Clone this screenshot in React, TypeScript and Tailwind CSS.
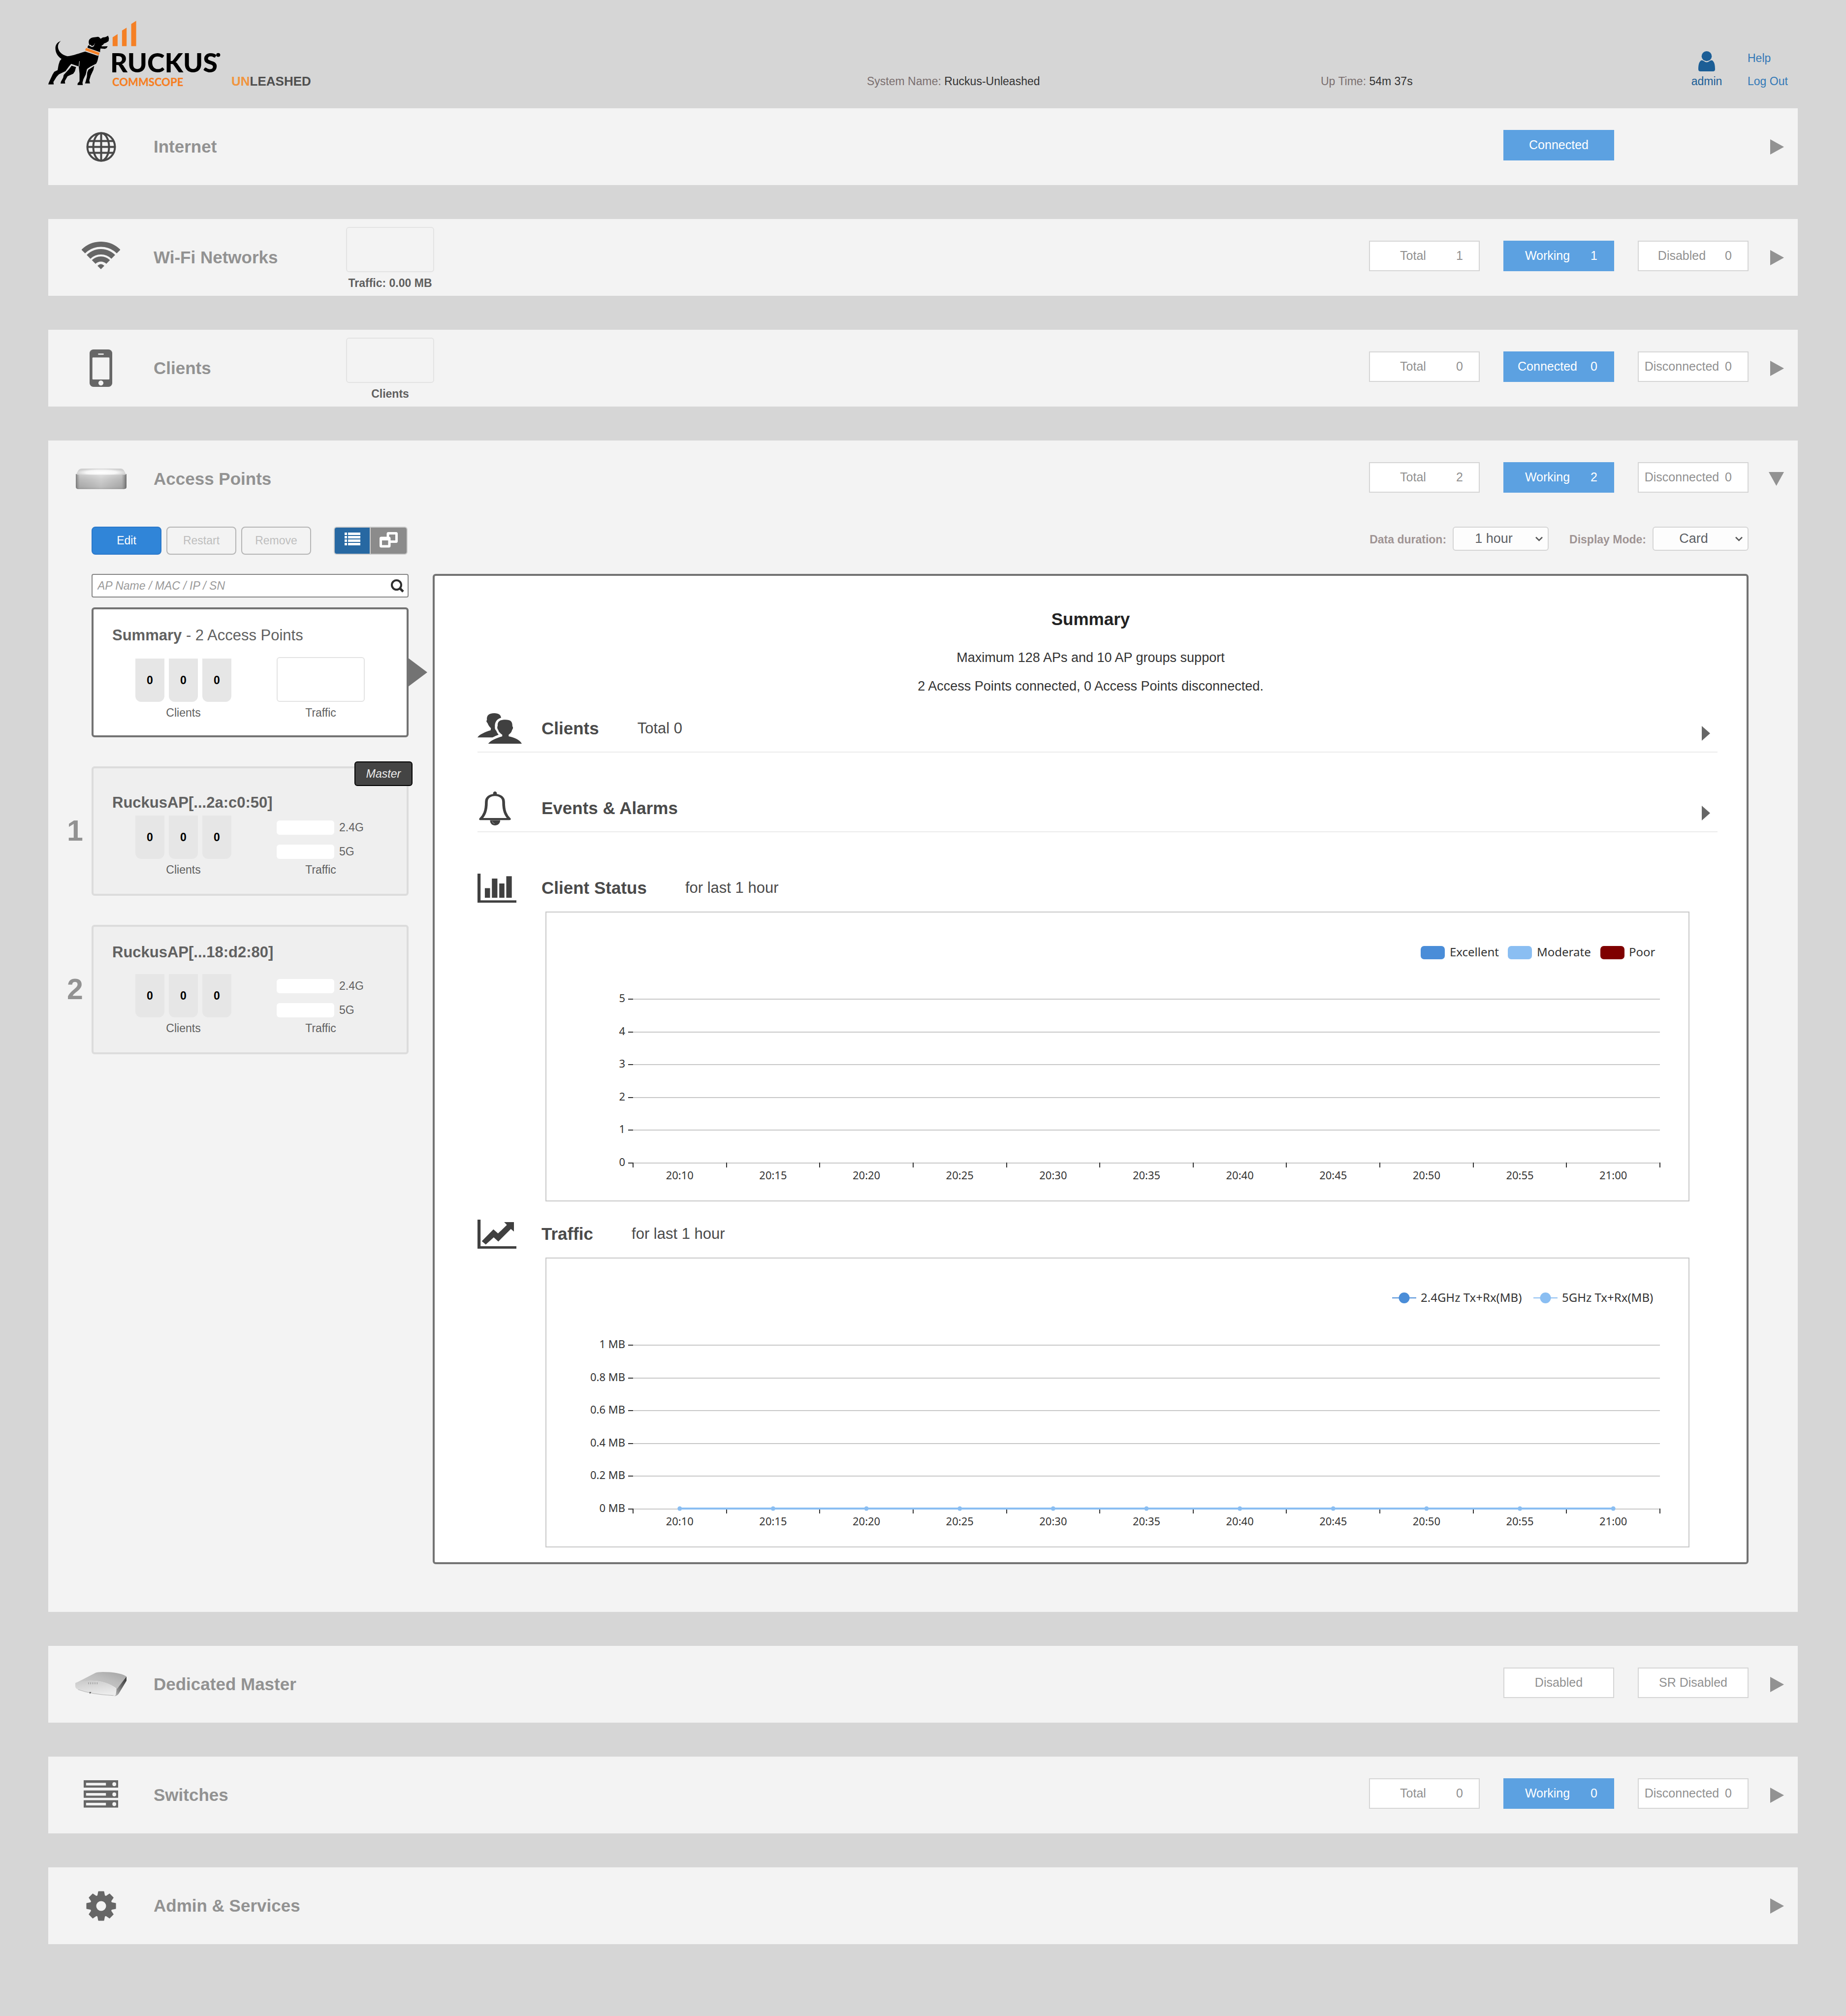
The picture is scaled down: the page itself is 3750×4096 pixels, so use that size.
import type { ReactNode } from "react";

type Chip = { label: string; value?: number; active?: boolean } | null;

const ARIAL = "font-['Liberation_Sans',Arial,sans-serif]";

/* ---------- Logo ---------- */

function Logo() {
  return (
    <svg width="354" height="140" viewBox="0 0 354 140" role="img" aria-label="Ruckus CommScope" className="shrink-0">
      <g transform="scale(0.3737 0.3255) translate(-52 -60)">
        <path d="M121 195 C106 210 103 225 106 242 C110 266 132 286 156 291 C188 288 220 272 253 262 L320 288 L326 286 C322 312 318 330 312 338 C292 350 272 360 262 373 L256 405 L243 435 L238 456 L240 471 L211 471 L212 460 L222 448 L222 400 L218 355 L200 348 L177 339 L165 354 L146 384 L110 404 L97 420 L80 452 L82 467 L52 467 L55 456 L76 404 L85 388 L103 378 L108 345 L115 320 L124 308 C98 288 90 262 91 236 C93 214 106 202 121 195 Z" />
        <path d="M179 350 L203 359 L197 385 L188 400 L157 416 L142 446 L144 462 L119 462 L121 450 L133 425 L136 408 L152 388 L165 372 Z" />
        <path d="M302 351 L298 375 L283 412 L275 442 L279 461 L252 461 L256 446 L262 420 L264 392 L270 376 Z" />
        <path d="M272 204 C271 184 286 174 302 173 C314 172 322 167 328 172 L337 182 L349 174 C360 174 368 170 377 163 L382 178 L380 197 L368 206 L355 212 L350 220 L342 225 L343 230 L375 229 L370 240 L360 245 L336 243 L334 256 L334 266 L265 238 L268 226 L276 220 C273 215 272 209 272 204 Z" />
        <path d="M273 224 L290 234 L300 229 L307 207 L300 222 L290 228 L280 219 Z" fill="#d6d6d6" />
        <path d="M222 322 L219 355" stroke="#d6d6d6" strokeWidth="3" />
        <path d="M258 239 L331 270 L327 285 L252 254 Z" fill="#f58025" />
        <path d="M402 228 V173 L429 153 V228 Z M453 228 V131 L478 113 V228 Z M503 228 V90 L530 70 V228 Z" fill="#f58025" />
        <ellipse cx="976" cy="283" rx="11" ry="12" />
      </g>
      <text x="126" y="108" fontSize="54" fontWeight="900" className="font-['Lato',sans-serif]">
        RUCKUS
      </text>
      <text x="130" y="136" fontSize="22" fontWeight="900" fill="#f58025" className="font-['Lato',sans-serif]">
        COMMSCOPE
      </text>
    </svg>
  );
}

/* ---------- Section icons ---------- */

function GlobeIcon() {
  return (
    <svg width="61" height="61" viewBox="0 0 61 61" fill="none" stroke="#484848" strokeWidth="4">
      <circle cx="30.5" cy="30.5" r="28" />
      <ellipse cx="30.5" cy="30.5" rx="16" ry="28" />
      <path d="M30.5 2 V59 M6 18.5 H55 M2 30.5 H59 M6 42.5 H55" />
    </svg>
  );
}

function WifiIcon() {
  return (
    <svg width="78" height="56" viewBox="0 0 78 56" fill="none" stroke="#666" className="mb-2">
      <path d="M3.1 20.1 A50.75 50.75 0 0 1 74.9 20.1" strokeWidth="10.5" />
      <path d="M13.9 30.9 A35.5 35.5 0 0 1 64.1 30.9" strokeWidth="10.8" />
      <path d="M24.3 41.3 A20.75 20.75 0 0 1 53.7 41.3" strokeWidth="10.5" />
      <path d="M39 56 L32 49 Q39 42 46 49 Z" fill="#666" stroke="none" />
    </svg>
  );
}

function PhoneIcon() {
  return (
    <svg width="46" height="76" viewBox="186 1241 81 192" preserveAspectRatio="none">
      <rect x="186" y="1241" width="81" height="192" rx="14" ry="19" fill="#666" />
      <rect x="196" y="1282" width="61" height="113" rx="3" fill="#f3f3f3" />
      <rect x="216" y="1262" width="21" height="6" rx="3" fill="#f3f3f3" />
      <ellipse cx="226.5" cy="1413" rx="9" ry="13" fill="#f3f3f3" />
    </svg>
  );
}

function AccessPointIcon() {
  return (
    <svg width="103" height="42" viewBox="97 165 183 97" preserveAspectRatio="none">
      <defs>
        <linearGradient id="apFront" x1="0" y1="0" x2="0" y2="1">
          <stop offset="0" stopColor="#dadada" />
          <stop offset="0.35" stopColor="#c4c4c4" />
          <stop offset="0.9" stopColor="#adadad" />
          <stop offset="1" stopColor="#8a8a8a" />
        </linearGradient>
        <linearGradient id="apEdge" x1="0" y1="0" x2="1" y2="0">
          <stop offset="0" stopColor="#666" stopOpacity="0.8" />
          <stop offset="0.08" stopColor="#888" stopOpacity="0.15" />
          <stop offset="0.5" stopColor="#fff" stopOpacity="0.2" />
          <stop offset="0.9" stopColor="#888" stopOpacity="0.2" />
          <stop offset="1" stopColor="#555" stopOpacity="0.8" />
        </linearGradient>
        <radialGradient id="apTop">
          <stop offset="0" stopColor="#fff" />
          <stop offset="0.6" stopColor="#f6f6f6" />
          <stop offset="1" stopColor="#cfcfcf" />
        </radialGradient>
      </defs>
      <path d="M97 202 Q104 165 118 165 H260 Q272 165 280 202 Z" fill="url(#apTop)" />
      <path d="M97 190 Q100 195 110 194 H267 Q277 195 280 190 V250 Q280 261 271 261 H106 Q97 261 97 250 Z" fill="url(#apFront)" />
      <path d="M97 190 Q100 195 110 194 H267 Q277 195 280 190 V250 Q280 261 271 261 H106 Q97 261 97 250 Z" fill="url(#apEdge)" />
    </svg>
  );
}

function MasterIcon() {
  return (
    <svg width="104" height="50" viewBox="172 222 238 113" preserveAspectRatio="none">
      <defs>
        <linearGradient id="dmTop" x1="0" y1="1" x2="1" y2="0">
          <stop offset="0" stopColor="#d2d2d2" />
          <stop offset="0.6" stopColor="#bcbcbc" />
          <stop offset="1" stopColor="#a2a2a2" />
        </linearGradient>
        <linearGradient id="dmFront" x1="0" y1="0" x2="0.4" y2="1">
          <stop offset="0" stopColor="#c9c9c9" />
          <stop offset="1" stopColor="#ececec" />
        </linearGradient>
        <linearGradient id="dmSide" x1="0" y1="1" x2="1" y2="0">
          <stop offset="0" stopColor="#bdbdbd" />
          <stop offset="0.5" stopColor="#6e6e6e" />
          <stop offset="1" stopColor="#333" />
        </linearGradient>
      </defs>
      <path d="M410 243 V262 L375 320 Q366 334 352 333 L362 300 Z" fill="url(#dmSide)" />
      <path d="M172 274 L266 226 Q275 222 300 222 Q378 222 410 243 L404 250 L366 300 Q320 262 240 262 Z" fill="url(#dmTop)" />
      <path d="M172 273 C190 264 215 262 240 262 C300 262 340 278 364 301 L360 328 Q355 334 344 333 Q260 328 185 303 Q172 297 172 288 Z" fill="url(#dmFront)" />
      <path d="M232 274 H280" stroke="#999" strokeWidth="9" strokeDasharray="3 7" />
      <path d="M185 303 Q250 326 350 330" stroke="#aaa" strokeWidth="2" fill="none" />
      <path d="M237 314 H246 L240 323 Z" fill="#555" />
    </svg>
  );
}

function SwitchIcon() {
  return (
    <svg width="70" height="56" viewBox="211 724 161 127" preserveAspectRatio="none" className="mb-1">
      {[724, 771, 816].map((y) => (
        <g key={y}>
          <rect x="211" y={y} width="161" height="34" fill="#666" />
          <rect x="222" y={y + 12} width="93" height="12" fill="#f3f3f3" />
          <circle cx="354" cy={y + 18} r="9" fill="#f3f3f3" />
        </g>
      ))}
    </svg>
  );
}

function GearIcon() {
  return (
    <svg width="61" height="61" viewBox="-70 -70 140 140">
      <g fill="#666" stroke="#666" strokeWidth="4" strokeLinejoin="round">
        <circle r="50" />
        {[0, 45, 90, 135, 180, 225, 270, 315].map((a) => (
          <path key={a} d="M-16 -46 L-12 -67 H12 L16 -46 Z" transform={`rotate(${a})`} />
        ))}
      </g>
      <circle r="23" fill="#f3f3f3" />
    </svg>
  );
}

/* ---------- Summary icons ---------- */

function PeopleIcon() {
  return (
    <svg width="90" height="62" viewBox="147 625 145 132" preserveAspectRatio="none" fill="#404040">
      <path d="M213 680 C212 660 220 653 238 653 C256 653 262 662 261 682 C264 684 264 692 260 698 C258 710 253 714 249 718 L249 725 C268 730 286 740 292 757 L182 757 C190 742 210 732 228 725 L228 718 C222 713 216 706 215 698 C211 692 211 684 213 680 Z" />
      <path d="M178 655 C176 635 184 625 202 625 C216 625 224 633 224 645 C210 650 203 664 204 684 C203 692 206 698 209 702 C210 708 213 712 216 718 C208 722 202 726 196 730 L147 730 C152 718 172 706 190 699 L191 690 C186 684 182 676 180 668 C175 662 176 657 178 655 Z" />
    </svg>
  );
}

function BellIcon() {
  return (
    <svg width="65" height="69" viewBox="151 961 104 145" preserveAspectRatio="none" className="ml-[3px]">
      <path
        d="M156 1079 C168 1063 175 1045 175 1005 C175 986 188 976 203 976 C218 976 231 986 231 1005 C231 1045 238 1063 250 1079 Z"
        fill="none"
        stroke="#404040"
        strokeWidth="9"
        strokeLinejoin="round"
      />
      <path d="M197 974 V966 Q203 956 209 966 V974 Z M187 1084 H220 C220 1098 212 1106 203 1106 C194 1106 187 1098 187 1084 Z" fill="#404040" />
      <path d="M194 1089 Q196 1097 202 1099" fill="none" stroke="#fff" strokeWidth="1" />
    </svg>
  );
}

function BarsIcon() {
  return (
    <svg width="79" height="59" viewBox="147 1316 127 124" preserveAspectRatio="none">
      <path
        d="M147 1316 H157 V1430 H274 V1440 H147 Z M171 1378 H188 V1419 H171 Z M194 1337 H212 V1419 H194 Z M218 1358 H235 V1419 H218 Z M241 1327 H259 V1419 H241 Z"
        fill="#404040"
      />
    </svg>
  );
}

function TrendIcon() {
  return (
    <svg width="79" height="59" viewBox="53 275 127 105" preserveAspectRatio="none">
      <path
        d="M53 275 H63 V371 H180 V380 H53 Z M67 353 L105 310 L120 325 L149 294 L140 284 H172 V318 L162 309 L121 354 L106 339 L80 365 Z"
        fill="#404040"
      />
    </svg>
  );
}

/* ---------- Section rows ---------- */

function Expander({ open, name }: { open?: boolean; name: string }) {
  return (
    <button
      type="button"
      aria-expanded={!!open}
      aria-label={`Toggle ${name}`}
      className="flex h-full w-[100px] shrink-0 items-center justify-end pr-7"
    >
      {open ? (
        <svg width="31" height="28" viewBox="0 0 31 28" fill="#929292">
          <path d="M0 0 H31 L15.5 28 Z" />
        </svg>
      ) : (
        <svg width="28" height="31" viewBox="0 0 28 31" fill="#929292">
          <path d="M0 0 L28 15.5 L0 31 Z" />
        </svg>
      )}
    </button>
  );
}

function StatusChip({ chip }: { chip: Chip }) {
  if (!chip) return <div />;
  return (
    <div
      className={
        chip.active
          ? "flex h-[62px] items-center border-2 border-[#5ca1e1] bg-[#5ca1e1] text-[25px] text-white"
          : "flex h-[62px] items-center border-2 border-[#d5d5d5] bg-white text-[25px] text-[#919191]"
      }
    >
      {chip.value === undefined ? (
        <span className="w-full text-center">{chip.label}</span>
      ) : (
        <>
          <span className="w-[175px] text-center">{chip.label}</span>
          <span>{chip.value}</span>
        </>
      )}
    </div>
  );
}

function SectionHeader({
  icon,
  title,
  chips,
  graph,
  open,
}: {
  icon: ReactNode;
  title: string;
  chips?: Chip[];
  graph?: string;
  open?: boolean;
}) {
  return (
    <div className="flex h-[156px] items-center">
      <div className="flex w-[214px] shrink-0 justify-center">{icon}</div>
      <h2 className="w-[391px] shrink-0 text-[35px] font-bold text-[#929292]">{title}</h2>
      {graph && (
        <div className="flex flex-col items-center gap-2 pt-1">
          <div className="h-[92px] w-[179px] rounded-md border-2 border-[#e3e3e3]" />
          <span className="text-[23px] leading-7 font-bold whitespace-nowrap text-[#5f5f5f]">{graph}</span>
        </div>
      )}
      <div className="ml-auto grid grid-cols-[225px_225px_225px] gap-12 pb-1.5">
        {(chips ?? []).map((chip, i) => (
          <StatusChip key={i} chip={chip} />
        ))}
      </div>
      <Expander open={open} name={title} />
    </div>
  );
}

/* ---------- Access point list ---------- */

function ClientCounts() {
  return (
    <div className="flex flex-col items-center gap-2">
      <div className="flex gap-[9px]">
        {["2.4G", "5G", "total"].map((band) => (
          <span
            key={band}
            className="flex h-[88px] w-[59px] items-center justify-center rounded-b-xl bg-[#e6e6e6] text-[23px] font-bold text-black"
          >
            0
          </span>
        ))}
      </div>
      <span className="text-[23px] leading-7 text-[#616161]">Clients</span>
    </div>
  );
}

function ApCard({ index, name, master }: { index: number; name: string; master?: boolean }) {
  return (
    <li className="flex items-center">
      <span className="w-[88px] shrink-0 pl-[38px] text-[59px] font-bold text-[#929292]">{index}</span>
      <article
        className={
          master
            ? "relative h-[263px] flex-1 rounded-md border-4 border-[#dcdcdc] bg-[#efefef] px-[38px] pt-[52px]"
            : "relative h-[263px] flex-1 rounded-md border-4 border-[#dcdcdc] bg-[#efefef] px-[38px] pt-[34px]"
        }
      >
        {master && (
          <span className="absolute -top-[14px] -right-3 flex h-[50px] w-[118px] items-center justify-center rounded-md border-2 border-black bg-[#444] text-[23px] text-[#eee] italic">
            Master
          </span>
        )}
        <h3 className="text-[31px] leading-9 font-bold text-[#616161]">{name}</h3>
        <div className={master ? "mt-2 flex items-end gap-[92px] pl-[47px]" : "mt-[26px] flex items-end gap-[92px] pl-[47px]"}>
          <ClientCounts />
          <div className="flex w-[179px] flex-col gap-2">
            <div className="flex flex-col gap-5 text-[23px] leading-[29px] text-[#616161]">
              {["2.4G", "5G"].map((band) => (
                <div key={band} className="flex gap-[10px]">
                  <span className="h-[29px] w-[117px] rounded-md bg-white" />
                  {band}
                </div>
              ))}
            </div>
            <span className="text-center text-[23px] leading-7 text-[#616161]">Traffic</span>
          </div>
        </div>
      </article>
    </li>
  );
}

function ApSidebar() {
  return (
    <div className="w-[732px] shrink-0">
      <div className="mb-[39px] ml-[88px] flex h-[57px] gap-[10px] text-[23px]">
        <button type="button" className="w-[142px] rounded-lg border-2 border-[#2a78ca] bg-[#3085d8] text-white">
          Edit
        </button>
        <button type="button" disabled className="w-[142px] rounded-lg border-2 border-[#b5b5b5] text-[#bebebe]">
          Restart
        </button>
        <button type="button" disabled className="w-[142px] rounded-lg border-2 border-[#b5b5b5] text-[#bebebe]">
          Remove
        </button>
        <div className="mr-0.5 ml-auto flex w-[150px] overflow-hidden rounded-md border-2 border-[#ccc]">
          <button type="button" aria-label="List view" aria-pressed="true" className="flex w-[73px] justify-center border-r-2 border-[#ccc] bg-[#2768a2] pt-[10px]">
            <svg width="32" height="26" viewBox="0 0 32 26" fill="#fff">
              {[0, 7, 14, 21].map((y) => (
                <g key={y}>
                  <rect y={y} width="5" height="5" />
                  <rect x="7" y={y} width="25" height="5" />
                </g>
              ))}
            </svg>
          </button>
          <button type="button" aria-label="Group view" aria-pressed="false" className="flex flex-1 justify-center bg-[#8b8b8b] pt-[9px]">
            <svg width="37" height="32" viewBox="0 0 37 32" fill="none" stroke="#fff" strokeWidth="5">
              <rect x="17" y="2.5" width="17.5" height="17" rx="1" />
              <rect x="2.5" y="12" width="17.5" height="17" rx="1" fill="#8b8b8b" />
              <path d="M4 14.5 H19" />
            </svg>
          </button>
        </div>
      </div>

      <div className="relative mb-5 ml-[88px]">
        <input
          type="search"
          aria-label="Search access points"
          placeholder="AP Name / MAC / IP / SN"
          className="block h-[48px] w-full rounded-sm border-2 border-[#858585] bg-white pr-12 pl-[10px] text-[23px] italic placeholder:text-[#9a9a9a]"
        />
        <svg width="27" height="27" viewBox="0 0 27 27" fill="none" stroke="#2e2e2e" className="pointer-events-none absolute top-[11px] right-[9px]">
          <circle cx="11.5" cy="11.5" r="9.5" strokeWidth="4" />
          <path d="M18 18 L25 25" strokeWidth="5" />
        </svg>
      </div>

      <ul className="flex flex-col gap-[59px]">
        <li className="flex pl-[88px]">
          <article className="relative h-[264px] flex-1 rounded-md border-4 border-[#737373] bg-white px-[38px] pt-[35px]">
            <h3 className="text-[31px] leading-9 text-[#616161]">
              <b>Summary</b> - 2 Access Points
            </h3>
            <div className="mt-[26px] flex items-end gap-[92px] pl-[47px]">
              <ClientCounts />
              <div className="flex flex-col items-center gap-2">
                <div className="h-[91px] w-[179px] rounded-md border-2 border-[#e3e3e3]" />
                <span className="text-[23px] leading-7 text-[#616161]">Traffic</span>
              </div>
            </div>
            <svg width="42" height="60" viewBox="0 0 42 60" fill="#737373" className="absolute top-[98px] left-full">
              <path d="M2 0 L42 30 L2 60 Z" />
            </svg>
          </article>
        </li>
        <ApCard index={1} name="RuckusAP[...2a:c0:50]" master />
        <ApCard index={2} name="RuckusAP[...18:d2:80]" />
      </ul>
    </div>
  );
}

/* ---------- Charts ---------- */

const TIMES = ["20:10", "20:15", "20:20", "20:25", "20:30", "20:35", "20:40", "20:45", "20:50", "20:55", "21:00"];
const LEFT = 178;
const RIGHT = 2264;
const TOP = 178;
const BOTTOM = 511;
const BAND = (RIGHT - LEFT) / TIMES.length;

function Chart({ label, ticks, legend, children }: { label: string; ticks: string[]; legend: ReactNode; children?: ReactNode }) {
  const step = (BOTTOM - TOP) / (ticks.length - 1);
  return (
    <div className="mr-[57px] ml-[138px] border-2 border-[#c8c8c8]">
      <svg
        viewBox="2 2 2320 585"
        role="img"
        aria-label={label}
        className="block w-full font-['Noto_Sans','Open_Sans',sans-serif]"
        fill="#333"
      >
        {legend}
        {ticks.map((t, i) => {
          const y = Math.round(TOP + i * step);
          return (
            <g key={t}>
              <rect x={LEFT} y={y - 1} width={RIGHT - LEFT} height="2" fill="#c8c8c8" />
              <rect x={LEFT - 10} y={y - 1} width="10" height="2" />
              <text x="162" y={y + 6} fontSize="22" textAnchor="end">
                {t}
              </text>
            </g>
          );
        })}
        {[...TIMES, ""].map((t, i) => (
          <g key={t}>
            <rect x={Math.round(LEFT + i * BAND) - 1} y={BOTTOM - 1} width="2" height="10" />
            <text x={LEFT + (i + 0.5) * BAND} y="544" fontSize="22" textAnchor="middle">
              {t}
            </text>
          </g>
        ))}
        {children}
      </svg>
    </div>
  );
}

function ClientStatusChart() {
  const legend = [
    { name: "Excellent", x: 1778, tx: 1837, fill: "#4a8dd8" },
    { name: "Moderate", x: 1955, tx: 2014, fill: "#8abef2" },
    { name: "Poor", x: 2143, tx: 2201, fill: "#7f0000" },
  ];
  return (
    <Chart
      label="Client status"
      ticks={["5", "4", "3", "2", "1", "0"]}
      legend={legend.map((l) => (
        <g key={l.name}>
          <rect x={l.x} y="70" width="49" height="27" rx="7" fill={l.fill} />
          <text x={l.tx} y="91" fontSize="24">
            {l.name}
          </text>
        </g>
      ))}
    />
  );
}

function TrafficChart() {
  const legend = [
    { name: "2.4GHz Tx+Rx(MB)", x: 1720, tx: 1778, fill: "#4a8dd8" },
    { name: "5GHz Tx+Rx(MB)", x: 2007, tx: 2065, fill: "#8abef2" },
  ];
  return (
    <Chart
      label="Traffic"
      ticks={["1 MB", "0.8 MB", "0.6 MB", "0.4 MB", "0.2 MB", "0 MB"]}
      legend={legend.map((l) => (
        <g key={l.name}>
          <rect x={l.x} y="81" width="49" height="2" fill={l.fill} />
          <circle cx={l.x + 24.5} cy="82" r="11" fill={l.fill} />
          <text x={l.tx} y="90" fontSize="24">
            {l.name}
          </text>
        </g>
      ))}
    >
      <rect x={LEFT + BAND / 2} y={BOTTOM - 3} width={RIGHT - LEFT - BAND} height="4" fill="#8abef2" />
      {TIMES.map((t, i) => (
        <circle key={t} cx={LEFT + (i + 0.5) * BAND} cy={BOTTOM - 1} r="4.5" fill="#8abef2" />
      ))}
    </Chart>
  );
}

/* ---------- Summary panel ---------- */

function PanelRow({
  icon,
  title,
  note,
  collapsed,
  className,
}: {
  icon: ReactNode;
  title: string;
  note?: string;
  collapsed?: boolean;
  className: string;
}) {
  return (
    <div className={`flex items-center text-[#4a4a4a] ${className}`}>
      <div className="w-[130px] shrink-0">{icon}</div>
      <h3 className="text-[35px] font-bold">{title}</h3>
      {note && <span className="ml-[78px] text-[31px]">{note}</span>}
      {collapsed && (
        <button type="button" aria-label={`Show ${title}`} aria-expanded="false" className="mt-5 mr-[15px] ml-auto">
          <svg width="17" height="30" viewBox="0 0 17 30" fill="#666">
            <path d="M0 0 L17 15 L0 30 Z" />
          </svg>
        </button>
      )}
    </div>
  );
}

function Picker({ id, label, options }: { id: string; label: string; options: string[] }) {
  return (
    <div className="flex items-center gap-[13px]">
      <label htmlFor={id} className="pt-1 text-[23px] font-bold text-[#9f9494]">
        {label}
      </label>
      <div className="relative">
        <select
          id={id}
          className="h-[49px] w-[195px] appearance-none rounded-md border-2 border-[#d5d5d5] bg-[#fdfdfd] pr-7 text-center text-[27px] text-[#5c6065]"
        >
          {options.map((o) => (
            <option key={o}>{o}</option>
          ))}
        </select>
        <svg width="15" height="10" viewBox="0 0 15 10" fill="none" stroke="#555" strokeWidth="2.5" className="pointer-events-none absolute top-[20px] right-3">
          <path d="M1 1.5 L7.5 8 L14 1.5" />
        </svg>
      </div>
    </div>
  );
}

function SummaryPanel() {
  return (
    <div className="mr-[100px] ml-[49px] min-w-0 flex-1">
      <div className="mb-[47px] flex justify-end gap-[42px]">
        <Picker id="duration" label="Data duration:" options={["1 hour", "1 day"]} />
        <Picker id="mode" label="Display Mode:" options={["Card", "List"]} />
      </div>
      <section className="rounded-md border-4 border-[#737373] bg-white pt-[66px] pr-[59px] pb-[30px] pl-[87px]">
        <div className="mr-[28px] text-center text-[27px] leading-8 text-[#333]">
          <h2 className="mb-10 text-[35px] leading-[44px] font-bold text-[#222]">Summary</h2>
          <p className="mb-[26px]">Maximum 128 APs and 10 AP groups support</p>
          <p className="mb-[23px]">2 Access Points connected, 0 Access Points disconnected.</p>
        </div>
        <PanelRow icon={<PeopleIcon />} title="Clients" note="Total 0" collapsed className="mb-[66px] h-[96px] border-b-2 border-[#ebebeb]" />
        <PanelRow icon={<BellIcon />} title="Events & Alarms" collapsed className="mb-[66px] h-[96px] border-b-2 border-[#ebebeb]" />
        <PanelRow icon={<BarsIcon />} title="Client Status" note="for last 1 hour" className="h-[95px]" />
        <ClientStatusChart />
        <PanelRow icon={<TrendIcon />} title="Traffic" note="for last 1 hour" className="mt-[19px] h-[95px]" />
        <TrafficChart />
      </section>
    </div>
  );
}

/* ---------- Page ---------- */

function Header() {
  return (
    <header className="grid h-[220px] grid-cols-[1663fr_922fr_753fr_114fr_102fr] items-end pb-[41px] text-[23px] leading-7 text-[#333]">
      <div className="flex items-end gap-[18px]">
        <Logo />
        <span className="text-[26px] font-bold text-[#4f4f4f]">
          <span className="text-[#f0953f]">UN</span>LEASHED
        </span>
      </div>
      <div>
        <span className="text-[#7a6f6f]">System Name:</span> Ruckus-Unleashed
      </div>
      <div>
        <span className="text-[#7a6f6f]">Up Time:</span> 54m 37s
      </div>
      <a href="#admin" className="flex w-[62px] flex-col items-center gap-[6px] text-[#1c5e96]">
        <svg width="34" height="41" viewBox="1162 76 56 117" preserveAspectRatio="none" fill="#1c5e96">
          <ellipse cx="1190" cy="105" rx="17" ry="29" />
          <path d="M1162 180 C1162 158 1164 137 1172 129 Q1176 128 1179 132 Q1190 148 1201 132 Q1204 128 1208 129 C1216 137 1218 158 1218 180 Q1218 193 1211 193 H1169 Q1162 193 1162 180 Z" />
        </svg>
        admin
      </a>
      <nav className="flex flex-col items-start gap-[19px] whitespace-nowrap text-[#3379b7]">
        <a href="#help">Help</a>
        <a href="#logout">Log Out</a>
      </nav>
    </header>
  );
}

export default function App() {
  return (
    <div className={`min-h-screen bg-[#d6d6d6] px-[98px] pb-[146px] ${ARIAL}`}>
      <Header />
      <main className="flex flex-col gap-[69px]">
        <section className="bg-[#f3f3f3]">
          <SectionHeader icon={<GlobeIcon />} title="Internet" chips={[null, { label: "Connected", active: true }, null]} />
        </section>
        <section className="bg-[#f3f3f3]">
          <SectionHeader
            icon={<WifiIcon />}
            title="Wi-Fi Networks"
            graph="Traffic: 0.00 MB"
            chips={[
              { label: "Total", value: 1 },
              { label: "Working", value: 1, active: true },
              { label: "Disabled", value: 0 },
            ]}
          />
        </section>
        <section className="bg-[#f3f3f3]">
          <SectionHeader
            icon={<PhoneIcon />}
            title="Clients"
            graph="Clients"
            chips={[
              { label: "Total", value: 0 },
              { label: "Connected", value: 0, active: true },
              { label: "Disconnected", value: 0 },
            ]}
          />
        </section>
        <section className="bg-[#f3f3f3] pb-[97px]">
          <SectionHeader
            open
            icon={<AccessPointIcon />}
            title="Access Points"
            chips={[
              { label: "Total", value: 2 },
              { label: "Working", value: 2, active: true },
              { label: "Disconnected", value: 0 },
            ]}
          />
          <div className="flex items-start pt-[19px]">
            <ApSidebar />
            <SummaryPanel />
          </div>
        </section>
        <section className="bg-[#f3f3f3]">
          <SectionHeader icon={<MasterIcon />} title="Dedicated Master" chips={[null, { label: "Disabled" }, { label: "SR Disabled" }]} />
        </section>
        <section className="bg-[#f3f3f3]">
          <SectionHeader
            icon={<SwitchIcon />}
            title="Switches"
            chips={[
              { label: "Total", value: 0 },
              { label: "Working", value: 0, active: true },
              { label: "Disconnected", value: 0 },
            ]}
          />
        </section>
        <section className="bg-[#f3f3f3]">
          <SectionHeader icon={<GearIcon />} title="Admin & Services" />
        </section>
      </main>
    </div>
  );
}
